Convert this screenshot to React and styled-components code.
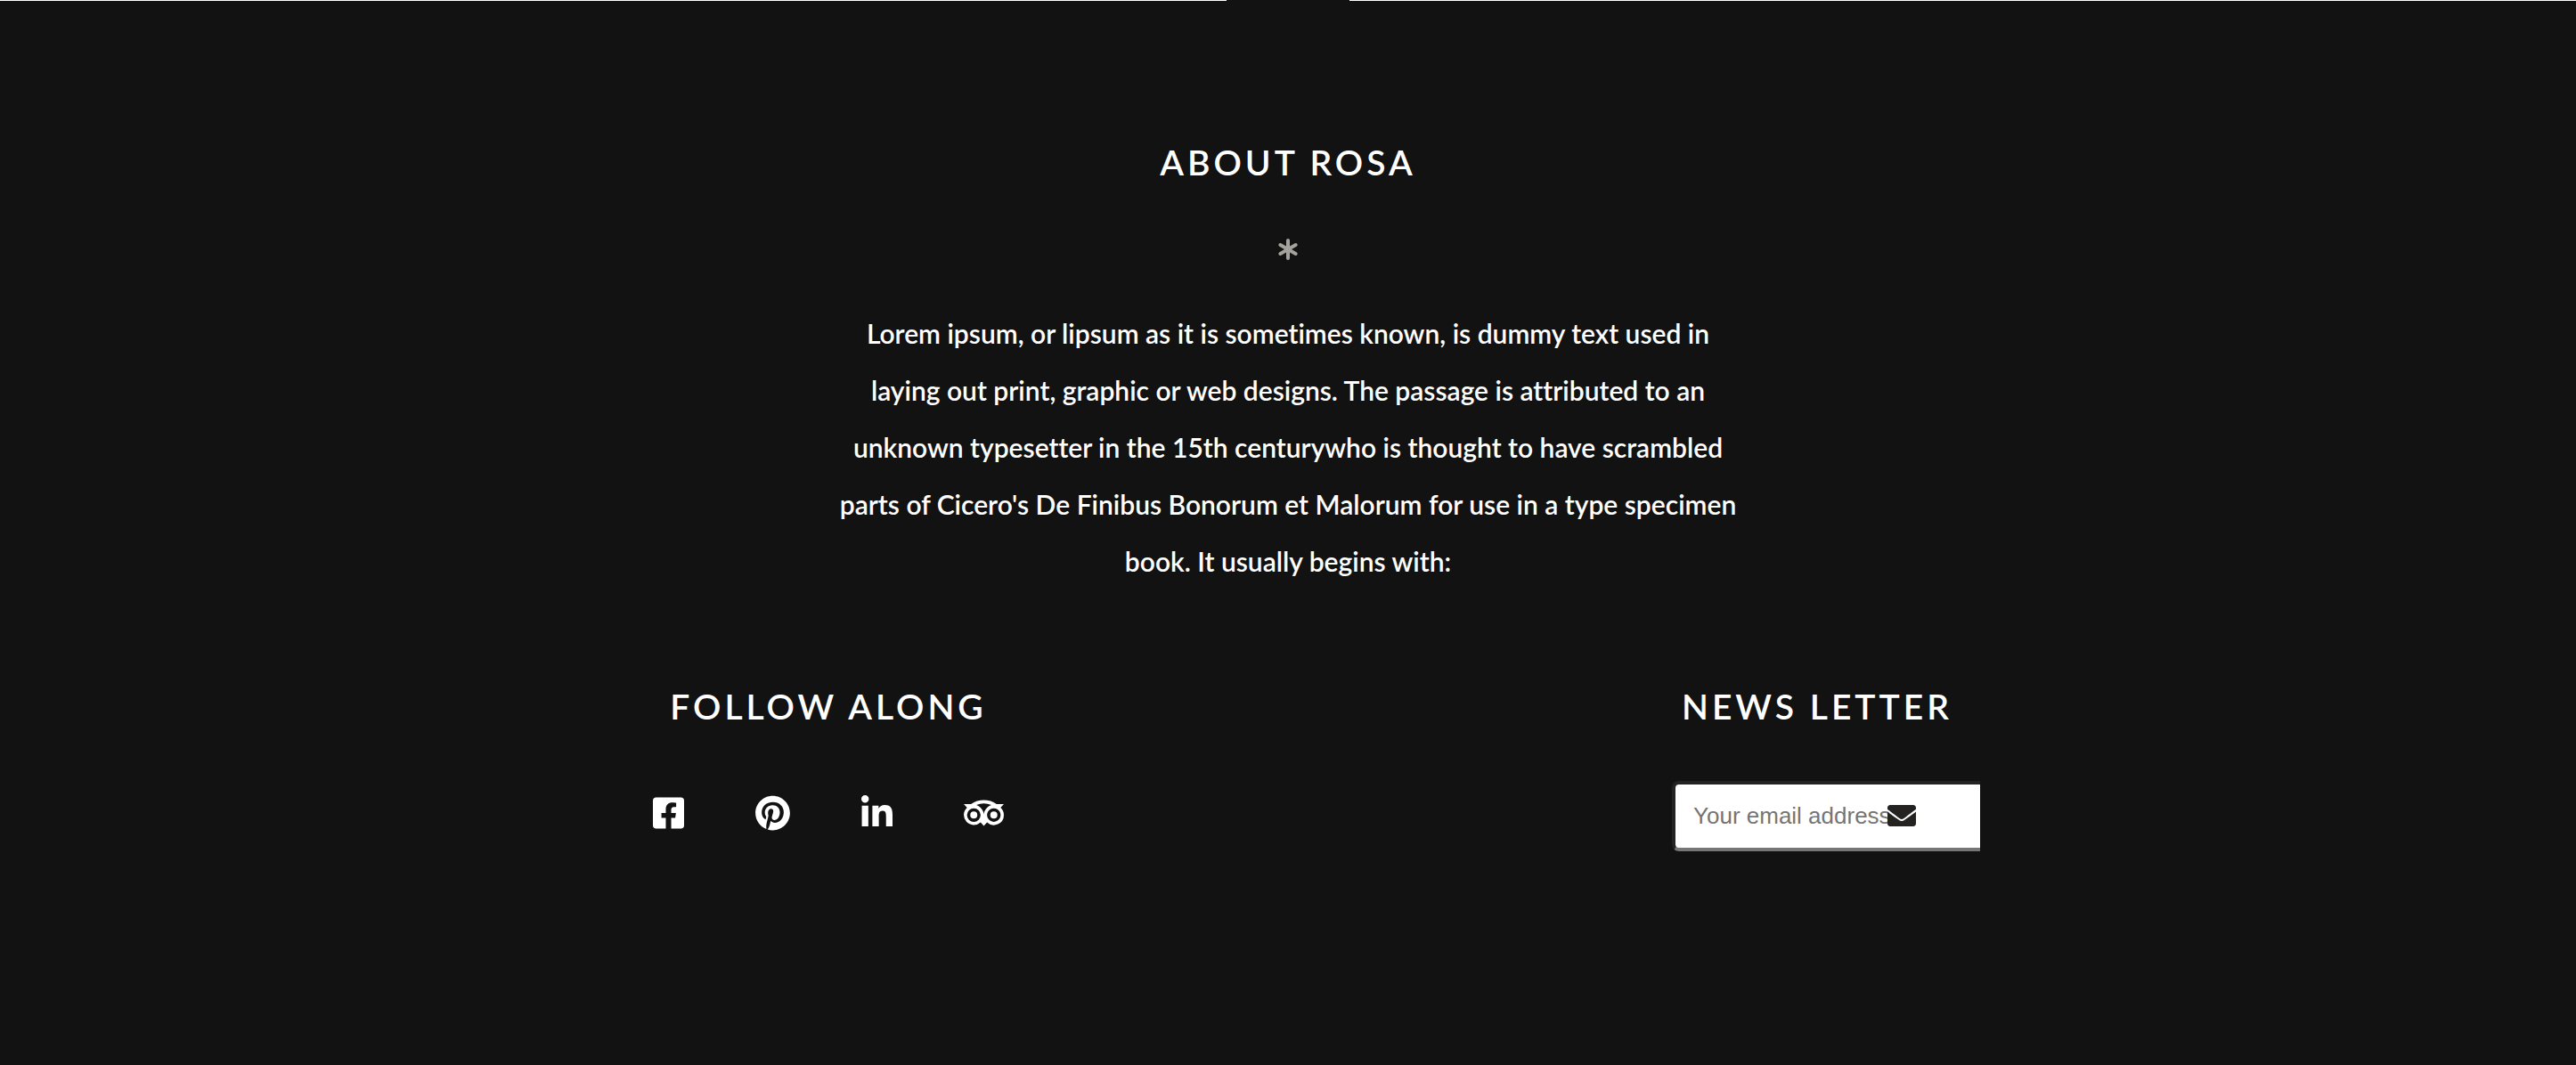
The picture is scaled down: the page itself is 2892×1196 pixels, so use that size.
import { useState } from 'react';
import styled, { createGlobalStyle } from 'styled-components';
import { Asterisk } from 'lucide-react';
import {
  FaEnvelope,
  FaFacebookSquare,
  FaLinkedinIn,
  FaPinterest,
  FaTripadvisor,
} from 'react-icons/fa';

const GlobalStyle = createGlobalStyle`
  * {
    box-sizing: border-box;
  }

  body {
    margin: 0;
    background: #121212;
    color: #ffffff;
    font-family: Lato, 'Open Sans', sans-serif;
    font-variant-ligatures: none;
  }
`;

const FooterContainer = styled.footer`
  min-height: 100vh;
  background: #121212;
`;

const Divider = styled.div`
  display: flex;
  justify-content: center;
  gap: 138px;
`;

const DividerLine = styled.span`
  flex: 1;
  height: 1px;
  background: #ffffff;
`;

const About = styled.section`
  display: flex;
  flex-direction: column;
  align-items: center;
  padding: 157px 24px 0;
`;

const Title = styled.h2`
  margin: 0;
  font-size: 39px;
  font-weight: 600;
  line-height: 48px;
  letter-spacing: 4px;
  text-align: center;
  text-transform: uppercase;
`;

const Ornament = styled(Asterisk)`
  width: 40px;
  height: 40px;
  margin: 54px 0 42px;
  color: #a5a19d;
`;

const Description = styled.p`
  max-width: 1020px;
  margin: 0;
  font-size: 30px;
  font-weight: 600;
  line-height: 64px;
  text-align: center;
`;

const Columns = styled.div`
  display: flex;
  flex-wrap: wrap;
  justify-content: space-between;
  gap: 64px;
  max-width: 1554px;
  margin: 0 auto;
  padding: 107px 0 80px 64px;
`;

const Column = styled.section`
  display: flex;
  flex-direction: column;
  align-items: center;
`;

const SocialList = styled.ul`
  display: flex;
  gap: 80px;
  margin: 0;
  padding: 76px 0 0;
  list-style: none;
`;

const SocialLink = styled.a`
  display: block;
  color: inherit;

  svg {
    display: block;
    width: ${({ $width }) => $width}px;
    height: 40px;
  }
`;

const Form = styled.form`
  position: relative;
  margin: 60px 0 0 20px;
`;

const EmailInput = styled.input`
  display: block;
  width: 346px;
  height: 79px;
  padding: 0 20px;
  border: 4px solid #242322;
  border-right: none;
  border-bottom-color: #767676;
  border-radius: 8px 0 0 8px;
  background: #ffffff;
  color: #242322;
  font-family: 'Liberation Sans', Arial, sans-serif;
  font-size: 26px;
  outline: none;

  &::placeholder {
    color: #757575;
    opacity: 1;
  }
`;

const SubmitButton = styled.button`
  position: absolute;
  top: 23px;
  right: 72px;
  padding: 0;
  border: none;
  background: transparent;
  color: #242322;
  cursor: pointer;

  svg {
    display: block;
    width: 32px;
    height: 32px;
  }
`;

const socials = [
  { name: 'Facebook', icon: FaFacebookSquare, width: 35 },
  { name: 'Pinterest', icon: FaPinterest, width: 39 },
  { name: 'LinkedIn', icon: FaLinkedinIn, width: 35 },
  { name: 'Tripadvisor', icon: FaTripadvisor, width: 45 },
];

function Newsletter() {
  const [email, setEmail] = useState('');

  const handleSubmit = (e) => {
    e.preventDefault();
    setEmail('');
  };

  return (
    <Form onSubmit={handleSubmit}>
      <EmailInput
        type="email"
        aria-label="Your email address"
        placeholder="Your email address"
        value={email}
        onChange={(e) => setEmail(e.target.value)}
      />
      <SubmitButton type="submit" aria-label="Subscribe">
        <FaEnvelope />
      </SubmitButton>
    </Form>
  );
}

function App() {
  return (
    <>
      <GlobalStyle />
      <FooterContainer>
        <Divider>
          <DividerLine />
          <DividerLine />
        </Divider>

        <About>
          <Title>About Rosa</Title>
          <Ornament strokeWidth={2.4} aria-hidden="true" />
          <Description>
            Lorem ipsum, or lipsum as it is sometimes known, is dummy text used in
            laying out print, graphic or web designs. The passage is attributed to an
            unknown typesetter in the 15th centurywho is thought to have scrambled
            parts of Cicero's De Finibus Bonorum et Malorum for use in a type specimen
            book. It usually begins with:
          </Description>
        </About>

        <Columns>
          <Column>
            <Title>Follow Along</Title>
            <SocialList>
              {socials.map(({ name, icon: Icon, width }) => (
                <li key={name}>
                  <SocialLink href="#" aria-label={name} $width={width}>
                    <Icon />
                  </SocialLink>
                </li>
              ))}
            </SocialList>
          </Column>

          <Column>
            <Title>News Letter</Title>
            <Newsletter />
          </Column>
        </Columns>
      </FooterContainer>
    </>
  );
}

export default App;
